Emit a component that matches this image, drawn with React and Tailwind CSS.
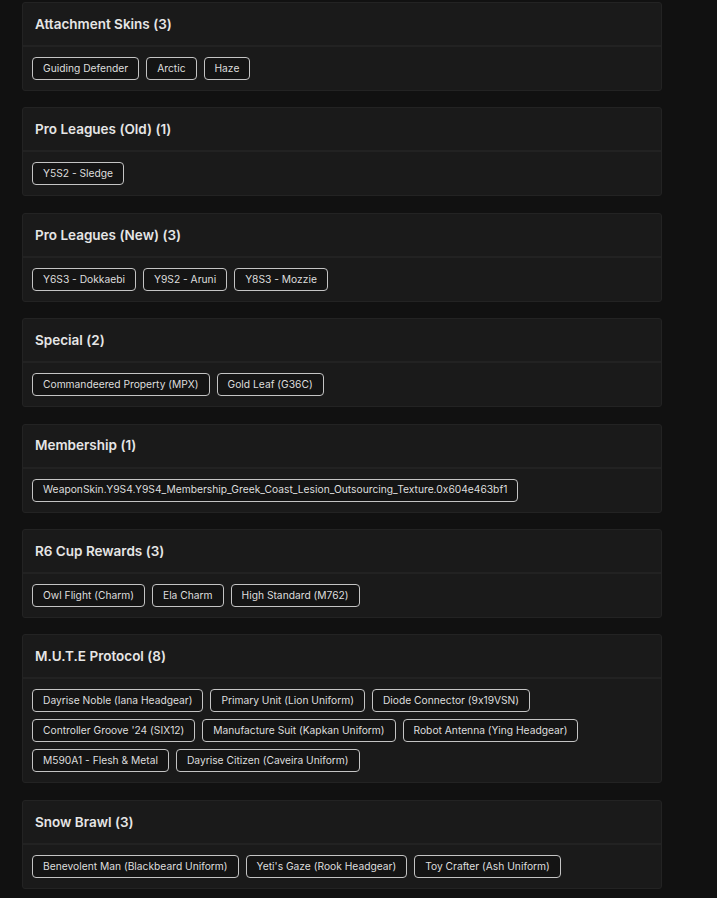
import React from 'react';

const sections = [
  { title: 'Attachment Skins', items: ['Guiding Defender', 'Arctic', 'Haze'] },
  { title: 'Pro Leagues (Old)', items: ['Y5S2 - Sledge'] },
  { title: 'Pro Leagues (New)', items: ['Y6S3 - Dokkaebi', 'Y9S2 - Aruni', 'Y8S3 - Mozzie'] },
  { title: 'Special', items: ['Commandeered Property (MPX)', 'Gold Leaf (G36C)'] },
  { title: 'Membership', items: ['WeaponSkin.Y9S4.Y9S4_Membership_Greek_Coast_Lesion_Outsourcing_Texture.0x604e463bf1'] },
  { title: 'R6 Cup Rewards', items: ['Owl Flight (Charm)', 'Ela Charm', 'High Standard (M762)'] },
  {
    title: 'M.U.T.E Protocol',
    items: [
      'Dayrise Noble (Iana Headgear)',
      'Primary Unit (Lion Uniform)',
      'Diode Connector (9x19VSN)',
      "Controller Groove '24 (SIX12)",
      'Manufacture Suit (Kapkan Uniform)',
      'Robot Antenna (Ying Headgear)',
      'M590A1 - Flesh & Metal',
      'Dayrise Citizen (Caveira Uniform)',
    ],
  },
  { title: 'Snow Brawl', items: ['Benevolent Man (Blackbeard Uniform)', "Yeti's Gaze (Rook Headgear)", 'Toy Crafter (Ash Uniform)'] },
];

const Section = ({ title, items }) => (
  <div className="mb-[16.4px] rounded-[3px] border border-[#232323] bg-[#1a1a1a]">
    <div className="flex h-[44px] items-center border-b-2 border-[#222222] px-3">
      <h3 className="text-[13.5px] font-semibold text-[#e6e6e6]">
        {title} ({items.length})
      </h3>
    </div>
    <div className="flex flex-wrap gap-[7px] px-[9px] pt-[10px] pb-[10px]">
      {items.map((item) => (
        <span
          key={item}
          className="flex h-[23px] items-center rounded-[4px] border border-[#c4c4c4] bg-[#141414] px-[10px] text-[10.25px] text-[#dedede]"
        >
          {item}
        </span>
      ))}
    </div>
  </div>
);

export default function App() {
  return (
    <div
      className="min-h-screen bg-[#111111] pl-[22px] pt-[2px] [font-feature-settings:'calt'_0]"
      style={{ fontFamily: 'Inter, "Noto Sans", sans-serif' }}
    >
      <div className="w-[640px]">
        {sections.map((s) => (
          <Section key={s.title} title={s.title} items={s.items} />
        ))}
      </div>
    </div>
  );
}
